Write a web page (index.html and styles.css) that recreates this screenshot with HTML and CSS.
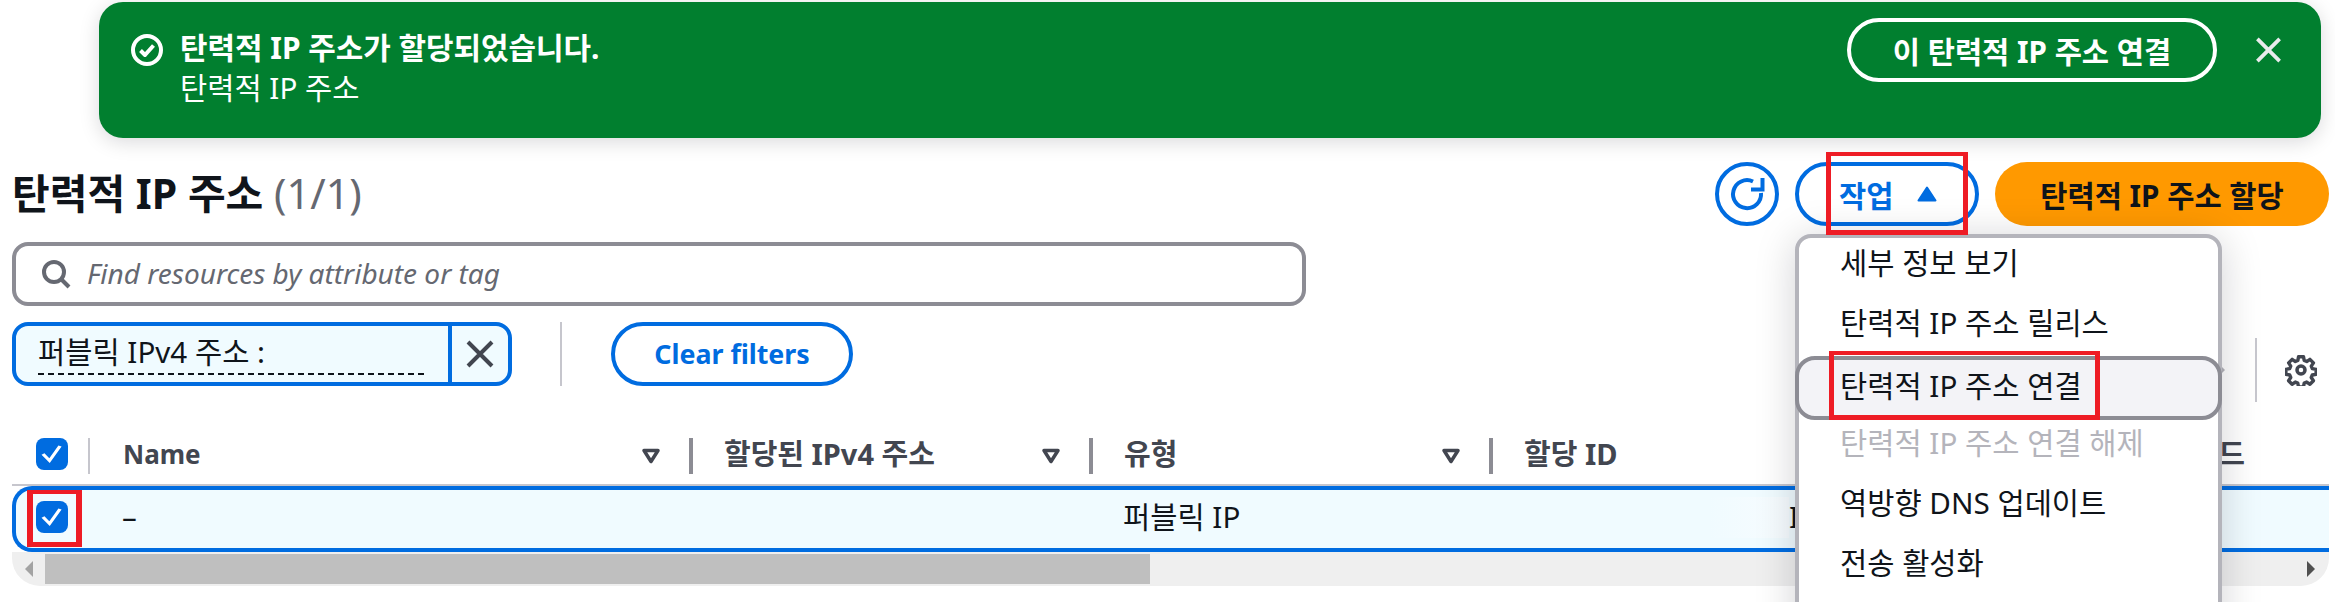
FILE: index.html
```html
<!DOCTYPE html>
<html lang="ko">
<head>
<meta charset="utf-8">
<title>탄력적 IP 주소</title>
<link rel="stylesheet" href="styles.css">
</head>
<body>
<div class="page">
  <div class="flash">
    <svg class="flash-icon" viewBox="0 0 32 32"><circle cx="16" cy="16" r="14" fill="none" stroke="#fff" stroke-width="4"/><path d="M9.500 16.500l4.500 4.500 8.500-9.500" fill="none" stroke="#fff" stroke-width="4" stroke-linejoin="round"/></svg>
    <div class="flash-text">
      <div class="flash-title">탄력적 IP 주소가 할당되었습니다.</div>
      <div>탄력적 IP 주소</div>
    </div>
    <button class="flash-action">이 탄력적 IP 주소 연결</button>
    <svg class="flash-close" viewBox="0 0 28 28"><path d="M2 2l24 24M26 2L2 26" stroke="#e9ebed" stroke-width="4" fill="none"/></svg>
  </div>

  <div class="head">
    <h1 class="title">탄력적 IP 주소 <span class="count">(1/1)</span></h1>
    <button class="btn-icon"><svg viewBox="0 0 40 40" width="40" height="40"><path d="M26 7.500A14 14 0 1 0 34 19" fill="none" stroke="#006ce0" stroke-width="4"/><path d="M35.500 4v11.500H24" fill="none" stroke="#006ce0" stroke-width="4"/></svg></button>
    <button class="btn-normal">작업<svg class="caret" viewBox="0 0 20 16" width="20" height="16"><path d="M10 1.500L18.500 14.500H1.500z" fill="#006ce0" stroke="#006ce0" stroke-width="2" stroke-linejoin="round"/></svg></button>
    <button class="btn-primary">탄력적 IP 주소 할당</button>
  </div>

  <div class="search">
    <svg viewBox="0 0 32 32" width="32" height="32"><circle cx="14" cy="14" r="10" fill="none" stroke="#656871" stroke-width="4"/><path d="M21 21l8 8" stroke="#656871" stroke-width="4" fill="none"/></svg>
    <span class="search-text">Find resources by attribute or tag</span>
  </div>

  <div class="filters">
    <div class="token">
      <div class="token-label"><span>퍼블릭 IPv4 주소 :</span></div>
      <div class="token-x"><svg viewBox="0 0 28 28" width="28" height="28"><path d="M2 2l24 24M26 2L2 26" stroke="#424650" stroke-width="4" fill="none"/></svg></div>
    </div>
    <div class="vline"></div>
    <button class="btn-clear">Clear filters</button>
    <div class="pager">
      <svg class="next" viewBox="0 0 10 16" width="10" height="16"><path d="M1 0v16l8-8z" fill="#b4b4bb"/></svg>
      <div class="vline short"></div>
      <svg class="gear" viewBox="0 0 32 32" width="32" height="32"><path d="M13.400 2h5.200l.8 4 2.600 1.100 3.400-2.300 3.700 3.700-2.300 3.400 1.100 2.600 4 .8v5.200l-4 .8-1.100 2.600 2.300 3.400-3.700 3.700-3.400-2.300-2.600 1.100-.8 4h-5.200l-.8-4-2.600-1.100-3.400 2.300-3.700-3.700 2.300-3.400-1.100-2.600-4-.8v-5.200l4-.8 1.100-2.600L3 8.500l3.700-3.700 3.400 2.300 2.600-1.100z" transform="translate(.8 .8) scale(.95)" fill="none" stroke="#424650" stroke-width="3.600" stroke-linejoin="round"/><circle cx="16" cy="16" r="4" fill="none" stroke="#424650" stroke-width="3.500"/></svg>
    </div>
  </div>

  <div class="table">
    <div class="thead">
      <div class="cell-check"><span class="check"><svg viewBox="0 0 32 48" width="32" height="32" preserveAspectRatio="none"><path d="M7 24l6.500 10L24 12" fill="none" stroke="#fff" stroke-width="3.500"/></svg></span></div>
      <div class="th"><span class="th-label th-latin">Name</span><svg class="sort" viewBox="0 0 20 16" width="20" height="16"><path d="M3 2.500h14L10 13.500z" fill="none" stroke="#424650" stroke-width="3.500" stroke-linejoin="round"/></svg></div>
      <div class="th"><span class="th-label">할당된 IPv4 주소</span><svg class="sort" viewBox="0 0 20 16" width="20" height="16"><path d="M3 2.500h14L10 13.500z" fill="none" stroke="#424650" stroke-width="3.500" stroke-linejoin="round"/></svg></div>
      <div class="th"><span class="th-label">유형</span><svg class="sort" viewBox="0 0 20 16" width="20" height="16"><path d="M3 2.500h14L10 13.500z" fill="none" stroke="#424650" stroke-width="3.500" stroke-linejoin="round"/></svg></div>
      <div class="th"><span class="th-label">할당 ID</span></div>
      <div class="th"><span class="th-label">역방향 DNS 레코드</span></div>
    </div>
    <div class="row">
      <div class="cell-check"><span class="check"><svg viewBox="0 0 32 48" width="32" height="32" preserveAspectRatio="none"><path d="M7 24l6.500 10L24 12" fill="none" stroke="#fff" stroke-width="3.500"/></svg></span></div>
      <div class="td">–</div>
      <div class="td"></div>
      <div class="td">퍼블릭 IP</div>
      <div class="td td-id"><span class="redact"></span><span>IP</span></div>
    </div>
    <div class="scroll">
      <svg class="arrow" viewBox="0 0 10 16" width="10" height="16"><path d="M9 0v16L1 8z" fill="#a3a3a3"/></svg>
      <div class="thumb"></div>
      <svg class="arrow arrow-right" viewBox="0 0 10 16" width="10" height="16"><path d="M1 0v16l8-8z" fill="#505050"/></svg>
    </div>
  </div>

  <div class="menu">
    <div class="menu-item">세부 정보 보기</div>
    <div class="menu-item">탄력적 IP 주소 릴리스</div>
    <div class="menu-item active">탄력적 IP 주소 연결</div>
    <div class="menu-item disabled">탄력적 IP 주소 연결 해제</div>
    <div class="menu-item">역방향 DNS 업데이트</div>
    <div class="menu-item">전송 활성화</div>
  </div>

  <div class="mark mark-actions"></div>
  <div class="mark mark-assoc"></div>
  <div class="mark mark-check"></div>
</div>
</body>
</html>
```
FILE: styles.css
```css
* { box-sizing: border-box; }
html, body { margin: 0; height: 602px; overflow: hidden; background: #fff; }
body, button { font-family: "Noto Sans", "Noto Sans CJK KR", sans-serif; font-size: 29.6px; color: #0f141a; }
.page { position: relative; width: 2335px; height: 602px; overflow: hidden; padding: 2px 6px 0 12px; }
button { cursor: pointer; background: none; }

.flash { display: flex; align-items: flex-start; height: 136px; margin: 0 8px 0 87px; padding: 16px 39px 0 32px; background: #017f2f; border-radius: 24px; color: #fff; box-shadow: 0 4px 20px rgba(0,7,22,.15); }
.flash-icon { width: 32px; height: 32px; margin: 16px 17px 0 0; flex: none; }
.flash-text { flex: 1; line-height: 40px; padding-top: 10px; }
.flash-title { font-weight: 700; font-size: 29.900px; }
.flash-action { width: 370px; height: 64px; border: 4px solid #fff; border-radius: 32px; background: none; color: #fff; font-weight: 700; padding: 0; }
.flash-close { width: 27px; height: 26px; margin: 19px 0 0 38px; }

.head { display: flex; align-items: center; gap: 16px; height: 64px; margin-top: 24px; }
.title { flex: 1; margin: 0 0 3px; font-size: 41px; font-weight: 700; line-height: 60px; }
.count { font-weight: 400; color: #656871; font-size: 41.500px; }
.btn-icon { display: flex; align-items: center; justify-content: center; width: 64px; height: 64px; border: 4px solid #006ce0; border-radius: 50%; padding: 0; }
.btn-normal { display: flex; align-items: center; gap: 24px; width: 184px; height: 64px; padding: 0 0 0 40px; border: 4px solid #006ce0; border-radius: 32px; color: #006ce0; font-weight: 700; }
.btn-primary { width: 334px; height: 64px; padding: 0; border: 0; border-radius: 32px; background: #ff9900; font-weight: 700; }

.search { display: flex; align-items: center; gap: 15px; width: 1294px; height: 64px; margin-top: 16px; padding-left: 24px; border: 4px solid #8c8c94; border-radius: 16px; color: #656871; font-style: italic; font-size: 28px; }
.search-text { padding-bottom: 2px; }

.filters { display: flex; align-items: flex-start; height: 64px; margin-top: 16px; }
.token { display: flex; width: 500px; height: 64px; border: 4px solid #006ce0; border-radius: 16px; background: #f0fbff; overflow: hidden; }
.token-label { flex: 1; padding: 3px 24px 0 22px; line-height: 46px; }
.token-label span { display: block; border-bottom: 2px dashed #0f141a; height: 46px; white-space: nowrap; }
.token-x { display: flex; align-items: center; justify-content: center; width: 60px; border-left: 4px solid #006ce0; }
.vline { width: 2px; height: 64px; margin-left: 48px; background: #c6c6cd; }
.btn-clear { width: 242px; height: 64px; margin-left: 49px; padding: 0 0 2px; border: 4px solid #006ce0; border-radius: 32px; color: #006ce0; font-weight: 700; font-size: 26.800px; }
.pager { display: flex; align-items: center; margin: 16px 0 0 auto; height: 64px; padding-right: 12px; }
.next { margin-right: 29px; }
.vline.short { margin: 0 28px 0 0; }
.gear { display: block; }

.table { margin-top: 52px; width: 2317px; border-radius: 0 0 28px 28px; overflow: hidden; }
.thead { display: grid; grid-template-columns: 76px 601px 400px 400px 485px 355px; height: 48px; border-bottom: 2px solid #c6c6cd; }
.cell-check { display: flex; align-items: flex-start; padding-left: 24px; }
.check { display: block; width: 32px; height: 32px; border-radius: 8px; background: #006ce0; }
.check svg { display: block; }
.th { display: flex; align-items: center; justify-content: space-between; height: 36px; padding: 0 28px 0 31px; border-left: 4px solid #8c8c94; font-weight: 700; color: #424650; white-space: nowrap; font-size: 29px; }
.th-label { line-height: 32px; padding-bottom: 4px; }
.thead .th:nth-child(2) { border-left: 2px solid #c6c6cd; padding-left: 33px; }
.th-latin { font-size: 26px; }
.row { display: grid; grid-template-columns: 72px 601px 400px 400px 840px; align-items: center; height: 66px; border: 4px solid #006ce0; border-right: 0; background: #f0fbff; border-radius: 20px 0 0 20px; }
.row .cell-check { padding: 0 0 4px 20px; }
.td { padding: 0 0 4px 34px; white-space: nowrap; line-height: 40px; }
.td-id { display: flex; align-items: center; }
.redact { width: 266px; height: 41px; background: linear-gradient(90deg, #f0fbff 70%, #f7fcff); }
.scroll { display: flex; align-items: center; height: 34px; background: #efefef; padding-right: 13px; }
.arrow { flex: none; margin-left: 12px; }
.thumb { width: 1105px; height: 30px; margin-left: 11px; background: #bfbfbf; }
.arrow-right { margin-left: auto; }

.menu { position: absolute; left: 1795px; top: 234px; width: 427px; height: 420px; background: #fff; border: 4px solid #b4b4bb; border-radius: 16px; box-shadow: 0 4px 40px rgba(0,7,22,.18); }
.menu-item { height: 60px; line-height: 50px; margin: 0 -4px; padding-left: 45px; white-space: nowrap; }
.menu-item.active { height: 64px; line-height: 52px; margin: -2px -4px; border: 4px solid #8c8c94; border-radius: 20px; background: #f3f3f7; padding-left: 41px; }
.menu-item.disabled { color: #b4b4bb; }

.mark { position: absolute; border: solid #ee1c25; border-width: 4px 5px 5px; }
.mark-actions { left: 1826px; top: 152px; width: 142px; height: 83px; }
.mark-assoc { left: 1829px; top: 351px; width: 271px; height: 69px; }
.mark-check { left: 27px; top: 490px; width: 55px; height: 57px; border-width: 4px 6px 5px; }
```
